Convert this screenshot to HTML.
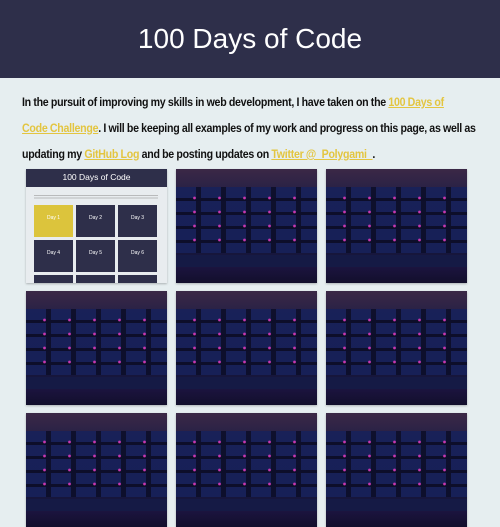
<!DOCTYPE html>
<html><head><style>
*{margin:0;padding:0;box-sizing:border-box}
body{width:500px;height:450px;overflow:hidden;background:#e6eef0;font-family:"Liberation Sans",sans-serif}
header{height:78px;background:#2e2f4a;color:#fff;text-align:center;font-size:28px;line-height:78px}
p{margin:11px 0 0 22px;font-size:12.2px;font-weight:bold;line-height:26px;color:#111;letter-spacing:-0.3px;word-spacing:-0.3px;white-space:nowrap;transform:scaleX(0.87);transform-origin:0 0;width:560px}
a{color:#e3c540;text-decoration:underline}
.grid{position:absolute;left:26px;top:169px}
.t{position:absolute;width:141px;height:114px;overflow:hidden;box-shadow:0 1px 2px rgba(0,0,0,.25)}
.kb{background:linear-gradient(180deg,#3b2846 0%,#221f45 25%,#14173a 70%,#1c1440 85%,#120f2c 100%)}
.keys{position:absolute;left:0;top:18px;width:141px;height:66px;background:repeating-linear-gradient(90deg,#17215a 0 20px,#0c0e2a 20px 25px);opacity:.9}
.gap{position:absolute;left:0;top:18px;width:141px;height:66px;background:repeating-linear-gradient(180deg,transparent 0 11px,#0d0e2a 11px 14px)}
.dots{position:absolute;left:0;top:22px;width:141px;height:60px;background:radial-gradient(circle,#c838b0 1px,transparent 1.8px) 6px 0/25px 14px}
.bar{position:absolute;left:0;top:86px;width:141px;height:12px;background:#151a45}
.ss{background:#e8ecef}
.ss .h{height:18px;background:#2e2f4a;color:#fff;font-size:8.5px;text-align:center;line-height:16px}
.ss .c{position:absolute;width:39px;height:32px;background:#2e2f4a;color:#fff;font-size:5px;text-align:center;padding-top:10px}
</style></head><body>
<header>100 Days of Code</header>
<p>In the pursuit of improving my skills in web development, I have taken on the <a>100 Days of</a><br><a>Code Challenge</a>. I will be keeping all examples of my work and progress on this page, as well as<br>updating my <a>GitHub Log</a> and be posting updates on <a>Twitter @_Polygami_</a>.</p>
<div class="grid">
<div class="t ss" style="left:0;top:0"><div class="h">100 Days of Code</div>
<div style="position:absolute;left:8px;top:26px;width:124px;height:5px;background:repeating-linear-gradient(180deg,#999 0 1px,transparent 1px 2.5px);opacity:.6"></div>
<div class="c" style="left:8px;top:36px;background:#dcc43c">Day 1</div>
<div class="c" style="left:50px;top:36px">Day 2</div>
<div class="c" style="left:92px;top:36px">Day 3</div>
<div class="c" style="left:8px;top:71px">Day 4</div>
<div class="c" style="left:50px;top:71px">Day 5</div>
<div class="c" style="left:92px;top:71px">Day 6</div>
<div class="c" style="left:8px;top:106px"></div>
<div class="c" style="left:50px;top:106px"></div>
<div class="c" style="left:92px;top:106px"></div>
</div>
<div class="t kb" style="left:150px;top:0"><div class="keys"></div><div class="gap"></div><div class="dots"></div><div class="bar"></div></div>
<div class="t kb" style="left:300px;top:0"><div class="keys"></div><div class="gap"></div><div class="dots"></div><div class="bar"></div></div>
<div class="t kb" style="left:0;top:122px"><div class="keys"></div><div class="gap"></div><div class="dots"></div><div class="bar"></div></div>
<div class="t kb" style="left:150px;top:122px"><div class="keys"></div><div class="gap"></div><div class="dots"></div><div class="bar"></div></div>
<div class="t kb" style="left:300px;top:122px"><div class="keys"></div><div class="gap"></div><div class="dots"></div><div class="bar"></div></div>
<div class="t kb" style="left:0;top:244px"><div class="keys"></div><div class="gap"></div><div class="dots"></div><div class="bar"></div></div>
<div class="t kb" style="left:150px;top:244px"><div class="keys"></div><div class="gap"></div><div class="dots"></div><div class="bar"></div></div>
<div class="t kb" style="left:300px;top:244px"><div class="keys"></div><div class="gap"></div><div class="dots"></div><div class="bar"></div></div>
</div>
</body></html>
